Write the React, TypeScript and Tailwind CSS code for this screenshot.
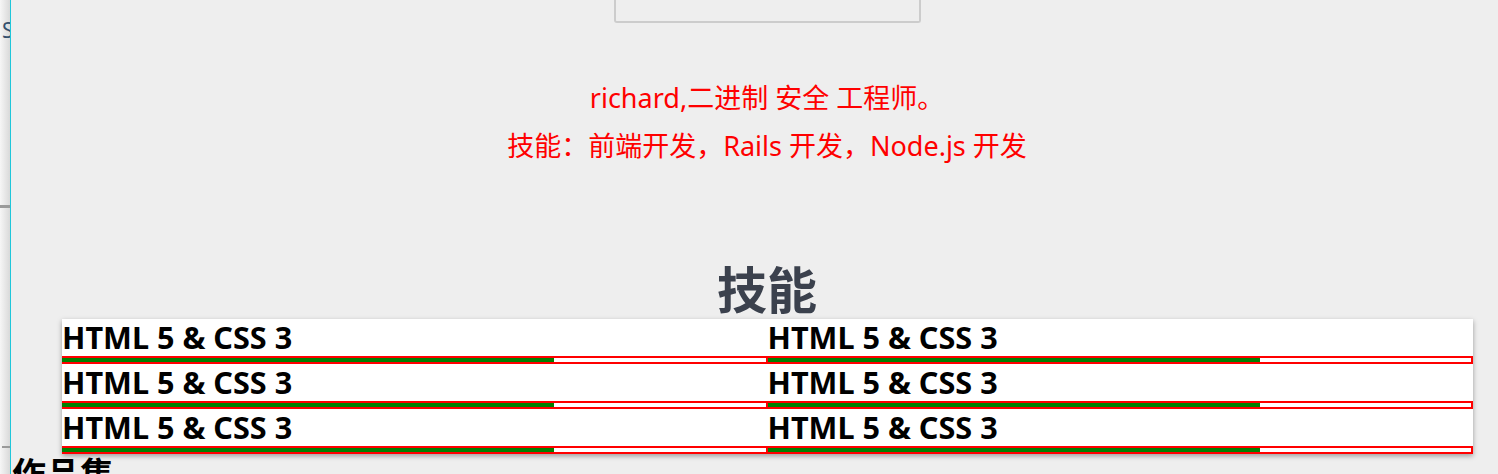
import React from "react";

const skills = [
  { name: "HTML 5 & CSS 3", level: 70 },
  { name: "HTML 5 & CSS 3", level: 70 },
  { name: "HTML 5 & CSS 3", level: 70 },
  { name: "HTML 5 & CSS 3", level: 70 },
  { name: "HTML 5 & CSS 3", level: 70 },
  { name: "HTML 5 & CSS 3", level: 70 },
];

function SkillItem({ name, level }: { name: string; level: number }) {
  return (
    <li className="flex flex-col">
      <h3 className="text-[30.6px] leading-[37px] font-bold text-black">{name}</h3>
      <div className="h-[8px] border-y-2 border-r-2 border-[#ff0000] bg-white">
        <div className="h-full bg-[#008000]" style={{ width: `${level}%` }} />
      </div>
    </li>
  );
}

export default function App() {
  return (
    <div
      className="flex w-[1498px] h-[474px] overflow-hidden bg-[#eeeeee]"
      style={{ fontFamily: '"Noto Sans", "Noto Sans CJK SC", sans-serif' }}
    >
      {/* window edge on the left */}
      <div className="relative w-[10px] shrink-0 overflow-hidden bg-gradient-to-r from-[#f6f6f6] to-[#d9d9d9]">
        <span className="absolute left-[2px] top-[19px] text-[21px] leading-[22px] text-[#35506e]">S</span>
        <div className="absolute left-0 top-[205px] w-[10px] h-[3px] bg-[#9a9a9a]" />
        <div className="absolute left-[2px] top-[446px] w-[8px] h-[2px] bg-[#9a9a9a]" />
      </div>
      <div className="w-px shrink-0 bg-[#1fc6da]" />

      <main className="w-[1512px] shrink-0">
        <div className="mx-auto w-[307px] h-[23px] border-2 border-t-0 border-[#cccccc] rounded-b-[3px]" />

        <div className="mt-[51px] text-center text-[27px] leading-[48px] text-[#ff0000]">
          <p>richard,二进制 安全 工程师。</p>
          <p>技能：前端开发，Rails 开发，Node.js 开发</p>
        </div>

        <h2 className="mt-[95px] mb-[4px] text-center text-[50px] leading-[50px] font-bold text-[#3b414d]">
          技能
        </h2>

        <ul className="ml-[51px] w-[1411px] grid grid-cols-2 bg-white shadow-[0_2px_5px_rgba(0,0,0,0.35)]">
          {skills.map((s, i) => (
            <SkillItem key={i} name={s.name} level={s.level} />
          ))}
        </ul>

        <h2 className="ml-px text-[34px] leading-[40px] font-bold text-black">作品集</h2>
      </main>
    </div>
  );
}
